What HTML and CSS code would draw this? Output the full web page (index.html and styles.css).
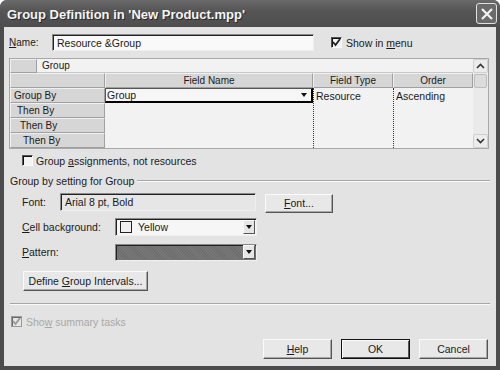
FILE: index.html
```html
<!DOCTYPE html>
<html lang="en">
<head>
    <meta charset="UTF-8">
    <title>Group Definition</title>
    <link rel="stylesheet" href="styles.css">
</head>
<body>
    <div class="window">
        <div class="titlebar">
            <span class="title">Group Definition in 'New Product.mpp'</span>
            <span class="close-btn">
                <svg width="14" height="14" viewBox="0 0 14 14"><path d="M2 2 L12 12 M12 2 L2 12" stroke="#f2f2f2" stroke-width="2.2"/></svg>
            </span>
        </div>
        <div class="content">
            <div class="name-row">
                <label class="name-label"><u>N</u>ame:</label>
                <div class="text-input name-input">Resource &amp;Group</div>
                <span class="checkbox checked"><svg width="9" height="9" viewBox="0 0 9 9"><path d="M1 4 L3.5 7 L8 1" stroke="#222" stroke-width="1.8" fill="none"/></svg></span>
                <span class="check-text">Show in <u>m</u>enu</span>
            </div>

            <div class="grid">
                <div class="grid-main">
                    <div class="grid-row title-row">
                        <div class="head-cell corner"></div>
                        <div class="group-cell">Group</div>
                    </div>
                    <div class="grid-row col-row">
                        <div class="head-cell row-head"></div>
                        <div class="head-cell col-name">Field Name</div>
                        <div class="head-cell col-type">Field Type</div>
                        <div class="head-cell col-order">Order</div>
                    </div>
                    <div class="grid-body">
                        <div class="row-heads">
                            <div class="head-cell row-head lvl0">Group By</div>
                            <div class="head-cell row-head lvl1">Then By</div>
                            <div class="head-cell row-head lvl2">Then By</div>
                            <div class="head-cell row-head lvl3">Then By</div>
                        </div>
                        <div class="data col-name">
                            <div class="field-edit">
                                <span>Group</span>
                                <span class="arrow"></span>
                            </div>
                        </div>
                        <div class="data col-type dotted"><div class="cell-text">Resource</div></div>
                        <div class="data col-order dotted"><div class="cell-text">Ascending</div></div>
                    </div>
                </div>
                <div class="scrollbar">
                    <div class="sb-btn"><svg width="9" height="6" viewBox="0 0 9 6"><path d="M1 5 L4.5 1.5 L8 5" stroke="#333" stroke-width="1.6" fill="none"/></svg></div>
                    <div class="sb-thumb"></div>
                    <div class="sb-track"></div>
                    <div class="sb-btn"><svg width="9" height="6" viewBox="0 0 9 6"><path d="M1 1 L4.5 4.5 L8 1" stroke="#333" stroke-width="1.6" fill="none"/></svg></div>
                </div>
            </div>

            <div class="assign-row">
                <span class="checkbox"></span>
                <span class="check-text">Group <u>a</u>ssignments, not resources</span>
            </div>

            <div class="group-box-head">
                <span>Group by setting for Group</span>
                <div class="line"></div>
            </div>

            <div class="setting-row font-row">
                <label class="setting-label short">Font:</label>
                <div class="text-input readonly font-field">Arial 8 pt, Bold</div>
                <div class="button font-btn"><span><u>F</u>ont...</span></div>
            </div>
            <div class="setting-row">
                <label class="setting-label"><u>C</u>ell background:</label>
                <div class="select">
                    <span class="swatch"></span>
                    <span class="select-text">Yellow</span>
                    <span class="select-arrow"><span class="arrow"></span></span>
                </div>
            </div>
            <div class="setting-row">
                <label class="setting-label"><u>P</u>attern:</label>
                <div class="select pattern">
                    <span class="select-arrow"><span class="arrow"></span></span>
                </div>
            </div>

            <div class="button intervals-btn"><span>Define <u>G</u>roup Intervals...</span></div>

            <div class="separator"></div>

            <div class="summary-row">
                <span class="checkbox disabled"><svg width="9" height="9" viewBox="0 0 9 9"><path d="M1 4 L3.5 7 L8 1" stroke="#999" stroke-width="1.8" fill="none"/></svg></span>
                <span class="check-text disabled-text">Sho<u>w</u> summary tasks</span>
            </div>

            <div class="footer">
                <div class="button footer-btn"><span><u>H</u>elp</span></div>
                <div class="button footer-btn default">OK</div>
                <div class="button footer-btn">Cancel</div>
            </div>
        </div>
    </div>
</body>
</html>
```

FILE: styles.css
```css
body {
    margin: 0;
    background: #ffffff;
    font-family: "Liberation Sans", Arial, sans-serif;
    font-size: 10px;
    color: #1a1a1a;
}
u {
    text-decoration: underline;
}
.window {
    width: 500px;
    height: 370px;
    background: #4c4c4c;
    border-radius: 7px 7px 0 0;
    display: flex;
    flex-direction: column;
}
.titlebar {
    height: 27px;
    display: flex;
    align-items: center;
    justify-content: space-between;
    padding: 0 3px 0 7px;
    background: linear-gradient(#6a6a6a, #555555 40%, #4e4e4e);
    border-radius: 7px 7px 0 0;
}
.title {
    color: #f4f4f4;
    font-weight: bold;
    font-size: 13px;
    text-shadow: 1px 1px 0 #2a2a2a;
    margin-top: 1px;
}
.close-btn {
    width: 19px;
    height: 19px;
    border: 1px solid #e0e0e0;
    border-radius: 3px;
    background: #6a6a6a;
    display: flex;
    align-items: center;
    justify-content: center;
}
.content {
    flex: 1;
    margin: 0 4px 4px 4px;
    background: #e3e3e3;
    padding: 7px 0 0 5px;
}
.name-row {
    display: flex;
    align-items: center;
    height: 17px;
}
.name-label {
    width: 43px;
}
.text-input {
    height: 17px;
    box-sizing: border-box;
    background: #f9f9f9;
    border: 1px solid #8a8a8a;
    border-right-color: #eeeeee;
    border-bottom-color: #eeeeee;
    box-shadow: inset 1px 1px 0 #222;
    padding: 2px 4px;
}
.name-input {
    width: 262px;
    font-size: 10.5px;
}
.checkbox {
    width: 11px;
    height: 11px;
    box-sizing: border-box;
    border: 1px solid #fafafa;
    border-top-color: #555;
    border-left-color: #555;
    box-shadow: inset 1px 1px 0 #111;
    background: #f4f4f4;
    display: inline-flex;
    align-items: center;
    justify-content: center;
}
.name-row .checkbox {
    margin-left: 17px;
}
.check-text {
    margin-left: 4px;
    font-size: 10.5px;
}

/* grid */
.grid {
    margin-top: 7px;
    width: 480px;
    height: 91px;
    box-sizing: border-box;
    border: 1px solid #a8a8a8;
    display: flex;
    background: #f2f2f2;
}
.grid-main {
    flex: 1;
    display: flex;
    flex-direction: column;
}
.grid-row {
    display: flex;
}
.title-row {
    height: 14px;
}
.col-row {
    height: 15px;
}
.head-cell {
    background: #d6d6d6;
    border-right: 1px solid #a0a0a0;
    border-bottom: 1px solid #a0a0a0;
    border-top: 1px solid #f0f0f0;
    border-left: 1px solid #f0f0f0;
    box-sizing: border-box;
    display: flex;
    align-items: center;
    justify-content: center;
}
.corner {
    width: 27px;
}
.group-cell {
    flex: 1;
    padding-left: 5px;
    display: flex;
    align-items: center;
    border-bottom: 1px solid #c8c8c8;
    background: #f2f2f2;
}
.row-head {
    width: 95px;
    height: 15px;
    justify-content: flex-start;
}
.col-name {
    width: 208px;
}
.col-type {
    width: 80px;
}
.col-order {
    width: 80px;
}
.grid-body {
    flex: 1;
    display: flex;
}
.row-heads {
    display: flex;
    flex-direction: column;
}
.lvl0 { padding-left: 3px; }
.lvl1 { padding-left: 6px; }
.lvl2 { padding-left: 9px; }
.lvl3 { padding-left: 12px; }
.data {
    box-sizing: border-box;
}
.dotted {
    border-left: 1px dotted #333;
}
.cell-text {
    height: 15px;
    display: flex;
    align-items: center;
    padding-left: 2px;
    font-size: 10.5px;
}
.field-edit {
    height: 15px;
    box-sizing: border-box;
    border: 1px solid #555;
    border-right: 2px solid #000;
    border-bottom: 2px solid #000;
    background: #f6f6f6;
    display: flex;
    align-items: center;
    justify-content: space-between;
    padding: 0 4px 0 1px;
    font-size: 10.5px;
}
.arrow {
    width: 0;
    height: 0;
    border-left: 3.5px solid transparent;
    border-right: 3.5px solid transparent;
    border-top: 4px solid #111;
}
.scrollbar {
    width: 15px;
    display: flex;
    flex-direction: column;
    background: #eaeaea;
}
.sb-btn {
    height: 14px;
    display: flex;
    align-items: center;
    justify-content: center;
    background: #ececec;
    border: 1px solid #cfcfcf;
    border-radius: 2px;
    box-sizing: border-box;
}
.sb-thumb {
    height: 12px;
    margin: 1px 1px;
    background: #dcdcdc;
    border: 1px solid #bdbdbd;
    border-radius: 2px;
}
.sb-track {
    flex: 1;
}

.assign-row {
    display: flex;
    align-items: center;
    margin: 6px 0 0 13px;
    height: 11px;
}
.assign-row .check-text {
    margin-left: 3px;
}
.group-box-head {
    display: flex;
    align-items: center;
    margin-top: 9px;
    height: 12px;
    padding-left: 1px;
    font-size: 10.5px;
}
.group-box-head .line {
    flex: 1;
    margin-left: 3px;
    margin-right: 6px;
    border-top: 1px solid #a6a6a6;
    border-bottom: 1px solid #fafafa;
}
.setting-row {
    display: flex;
    align-items: center;
    height: 18px;
    margin-top: 7px;
    padding-left: 13px;
}
.font-row {
    margin-top: 6px;
}
.setting-label {
    width: 93px;
    font-size: 10.5px;
}
.setting-label.short {
    width: 38px;
}
.readonly {
    background: #e6e6e6;
    height: 18px;
}
.font-field {
    width: 196px;
    font-size: 10.5px;
}
.button {
    box-sizing: border-box;
    background: #e8e8e8;
    border: 1px solid #fbfbfb;
    border-right-color: #555;
    border-bottom-color: #555;
    box-shadow: inset -1px -1px 0 #a8a8a8;
    display: flex;
    align-items: center;
    justify-content: center;
    font-size: 10.5px;
}
.font-btn {
    width: 68px;
    height: 19px;
    margin-left: 9px;
    margin-top: 2px;
}
.select {
    width: 142px;
    height: 18px;
    box-sizing: border-box;
    border: 1px solid #888;
    border-right-color: #f0f0f0;
    border-bottom-color: #f0f0f0;
    box-shadow: inset 1px 1px 0 #222;
    background: #f6f6f6;
    display: flex;
    align-items: center;
    padding-left: 4px;
}
.swatch {
    width: 12px;
    height: 12px;
    box-sizing: border-box;
    border: 1px solid #222;
    background: #f0f0f0;
}
.select-text {
    margin-left: 6px;
    flex: 1;
    font-size: 10.5px;
}
.select-arrow {
    width: 12px;
    height: 14px;
    margin-left: auto;
    margin-right: 1px;
    background: #e6e6e6;
    border: 1px solid #fafafa;
    border-right-color: #555;
    border-bottom-color: #555;
    box-sizing: border-box;
    display: flex;
    align-items: center;
    justify-content: center;
}
.pattern {
    background: repeating-linear-gradient(45deg, #777 0 1px, #6e6e6e 1px 2px);
    height: 17px;
}
.intervals-btn {
    width: 125px;
    height: 20px;
    margin: 10px 0 0 14px;
}
.separator {
    margin: 12px 6px 0 1px;
    border-top: 1px solid #a6a6a6;
    border-bottom: 1px solid #fafafa;
}
.summary-row {
    display: flex;
    align-items: center;
    height: 11px;
    margin: 11px 0 0 2px;
}
.checkbox.disabled {
    border-color: #9a9a9a;
    box-shadow: inset 1px 1px 0 #666;
    background: #e6e6e6;
}
.disabled-text {
    color: #a8a8a8;
    margin-left: 4px;
}
.footer {
    display: flex;
    justify-content: flex-end;
    gap: 9px;
    margin: 12px 8px 0 0;
}
.footer-btn {
    width: 69px;
    height: 20px;
}
.footer-btn.default {
    border: 1px solid #111;
    box-shadow: inset 1px 1px 0 #fbfbfb, inset -1px -1px 0 #555;
}
```
